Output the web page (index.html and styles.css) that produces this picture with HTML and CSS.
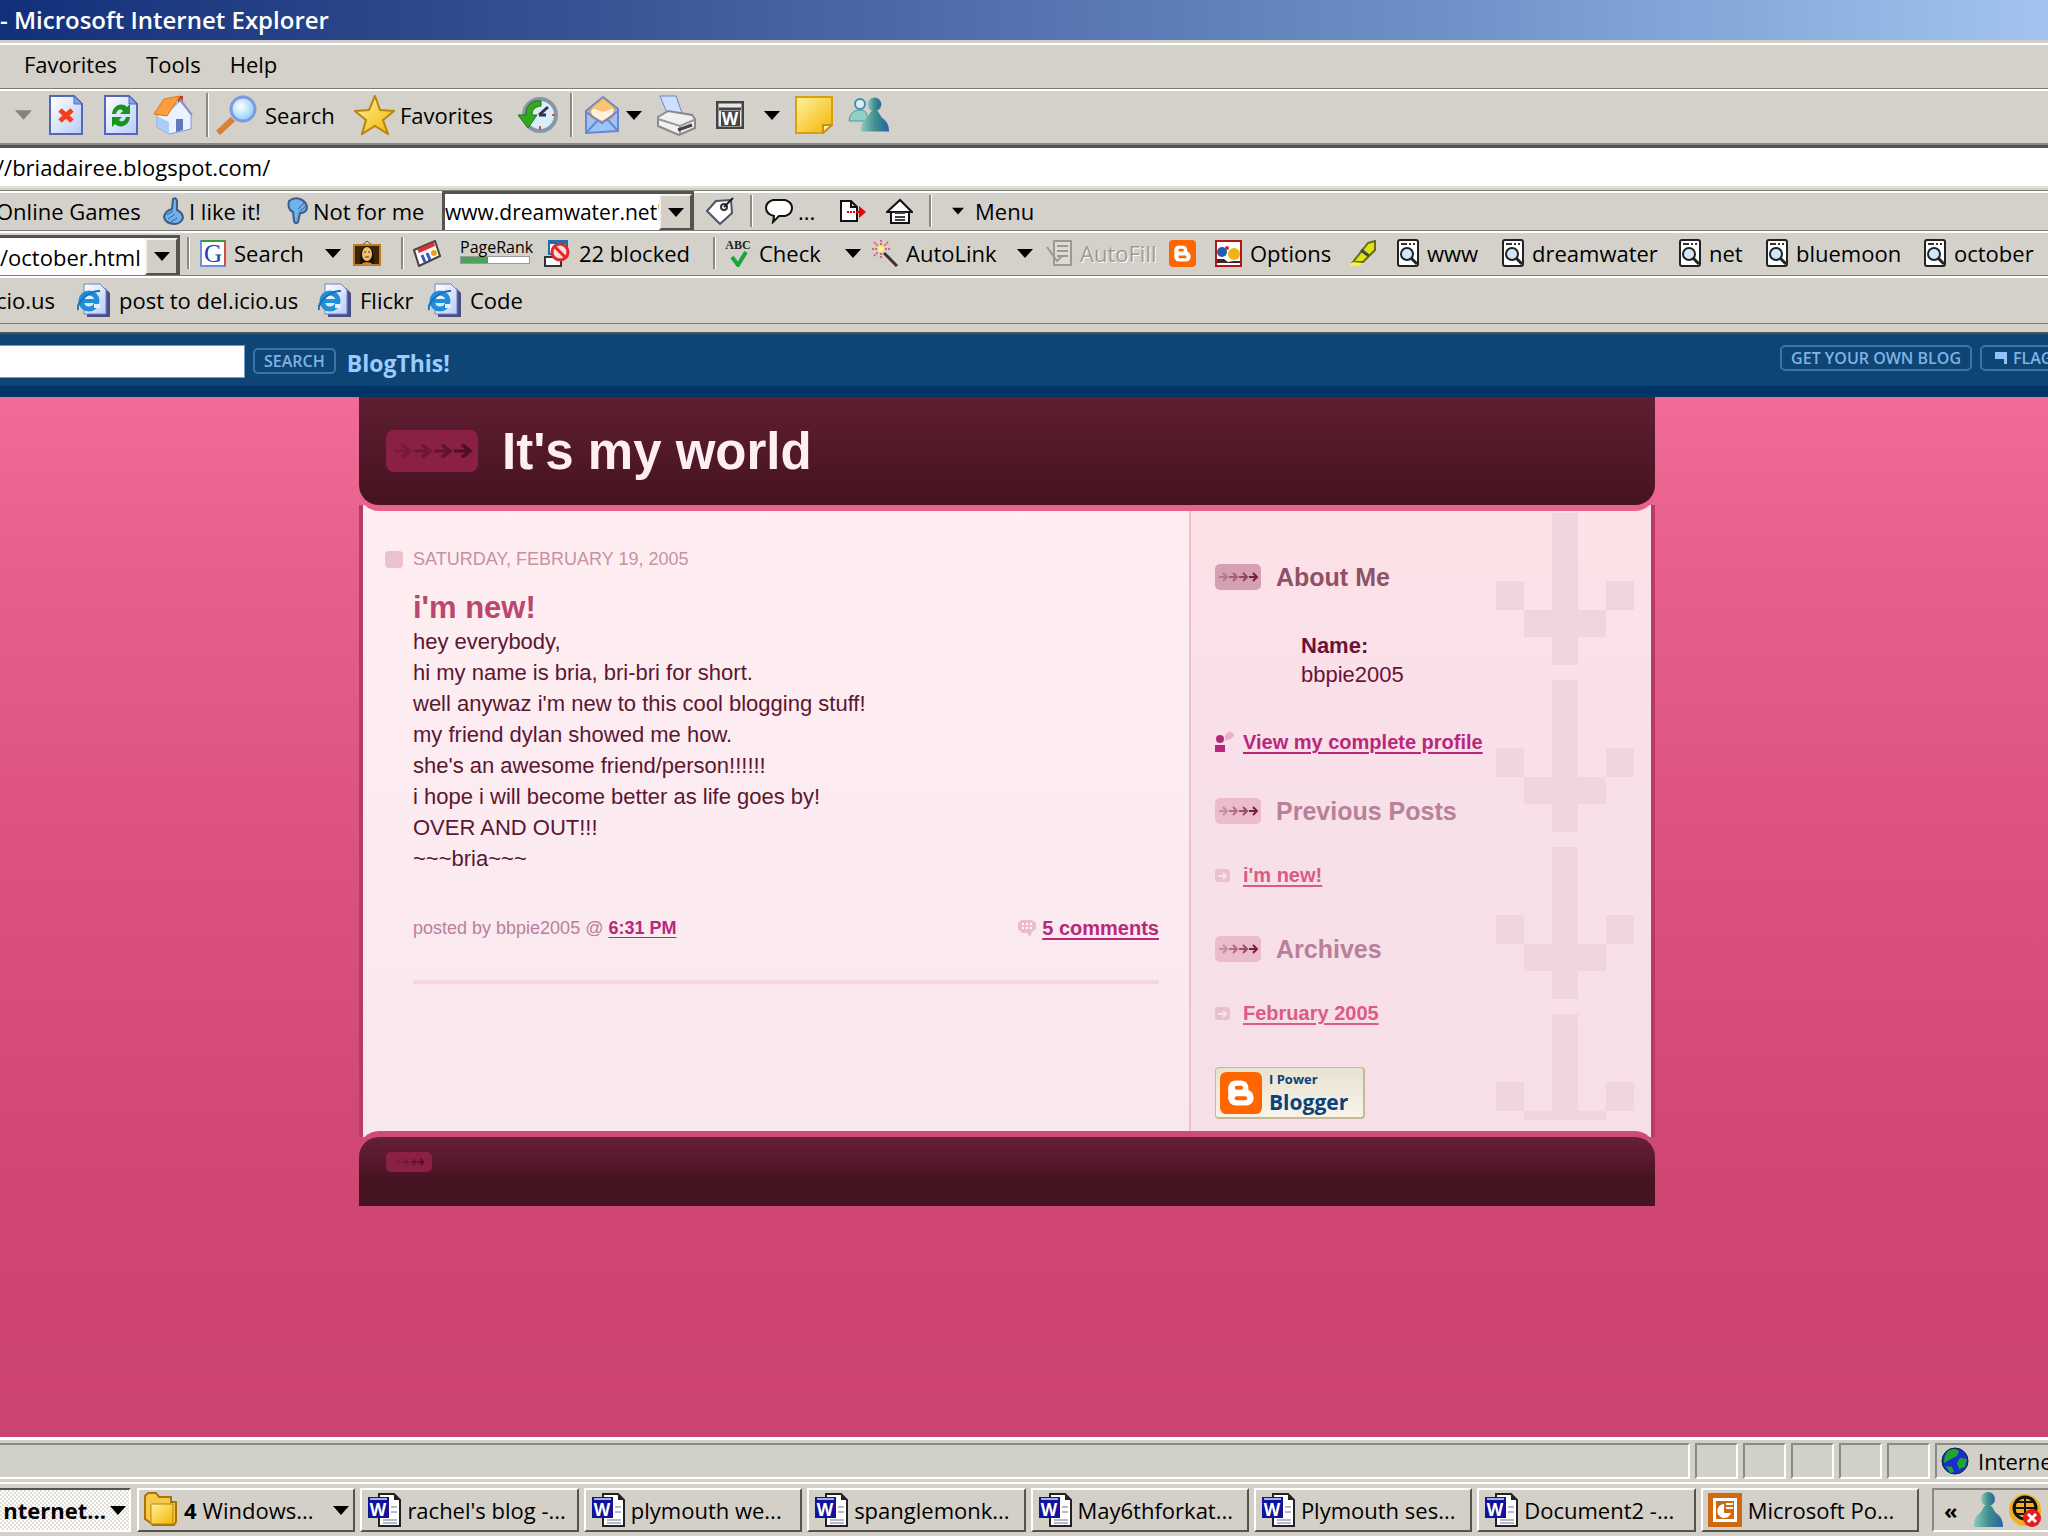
FILE: index.html
```
<!DOCTYPE html>
<html lang="en">
<head>
    <meta charset="UTF-8">
    <meta name="viewport" content="width=device-width, initial-scale=1.0">
    <title>It's my world - Microsoft Internet Explorer</title>
    <link rel="stylesheet" href="styles.css">
</head>
<body>
    <!-- shared icons -->
    <svg class="sprite" width="0" height="0" aria-hidden="true">
        <defs>
            <linearGradient id="paper" x1="0" y1="0" x2="1" y2="1"><stop offset="0" stop-color="#fff"/><stop offset="1" stop-color="#b9ccf6"/></linearGradient>
            <linearGradient id="gold" x1="0" y1="0" x2="1" y2="1"><stop offset="0" stop-color="#fff3a0"/><stop offset="1" stop-color="#f4b400"/></linearGradient>
            <linearGradient id="buddy" x1="0" y1="0" x2="1" y2="0"><stop offset="0" stop-color="#8fc9c2"/><stop offset=".5" stop-color="#3f8f8c"/><stop offset="1" stop-color="#2a62a8"/></linearGradient>
            <radialGradient id="lens" cx=".4" cy=".4" r=".6"><stop offset="0" stop-color="#fff"/><stop offset="1" stop-color="#8fd0f8"/></radialGradient>
            <symbol id="page" viewBox="0 0 34 40"><path d="M1 1h24l8 8v30H1z" fill="url(#paper)" stroke="#5468b8" stroke-width="2"/><path d="M25 1v8h8z" fill="#7fa4ee" stroke="#5468b8"/></symbol>
            <symbol id="ie" viewBox="0 0 34 34"><path d="M10 5h18l5 5v24H10z" fill="#4a4e86"/><path d="M7 1h16l6 6v24H7z" fill="url(#paper)" stroke="#6d83c8"/><circle cx="12" cy="18" r="8" fill="none" stroke="#1f8fdc" stroke-width="5"/><path d="M6 18h14" stroke="#1f8fdc" stroke-width="4"/><path d="M17 21h6v4h-6z" fill="#e6eefb"/><path d="M1 27C-1 20 12 7 23 8" fill="none" stroke="#1673b8" stroke-width="2"/></symbol>
            <symbol id="word" viewBox="0 0 34 34"><path d="M12 1h15l6 6v26H12z" fill="#fff" stroke="#222" stroke-width="2"/><path d="M27 1v6h6z" fill="#222"/><path d="M24 14h6M24 19h6M16 27h14M16 30h14" stroke="#b8b8c8" stroke-width="2"/><path d="M1 4h21v21H1z" fill="#12129a"/><path d="M3 6h17" stroke="#9fb0f0" stroke-width="2"/><text x="11" y="23" text-anchor="middle" class="icon-letter" font-size="17" fill="#fff">W</text></symbol>
            <symbol id="find" viewBox="0 0 22 28"><rect x="1" y="1" width="20" height="26" rx="2" fill="#fff" stroke="#222" stroke-width="2"/><path d="M4 5h6M12 5h2M16 5h2" stroke="#333" stroke-width="2"/><circle cx="10" cy="15" r="6" fill="#cfe6fb" stroke="#222" stroke-width="2"/><path d="M14 19l6 6" stroke="#222" stroke-width="3"/></symbol>
            <symbol id="down" viewBox="0 0 16 9"><path d="M0 0h16l-8 9z" fill="currentColor"/></symbol>
            <symbol id="blogger" viewBox="0 0 40 40"><rect width="40" height="40" rx="6" fill="#ff6600"/><rect x="8" y="8" width="19" height="16" rx="7" fill="#fff"/><rect x="8" y="17" width="24" height="15" rx="7" fill="#fff"/><rect x="8" y="14" width="10" height="12" fill="#fff"/><rect x="14" y="13" width="8" height="4" rx="2" fill="#ff6600"/><rect x="14" y="23" width="12" height="4" rx="2" fill="#ff6600"/></symbol>
            <symbol id="arrows" viewBox="0 0 46 26"><g fill="none" stroke="currentColor" stroke-width="2"><path d="M4 13h8M8 9l4 4-4 4" opacity=".3"/><path d="M14 13h8M18 9l4 4-4 4" opacity=".5"/><path d="M24 13h8M28 9l4 4-4 4" opacity=".7"/><path d="M34 13h8M38 9l4 4-4 4"/></g></symbol>
            <symbol id="person" viewBox="0 0 32 36"><circle cx="16" cy="7" r="7" fill="url(#buddy)"/><path d="M2 35c0-8 2-11 6-14 3-3 3-8 8-8s5 5 8 8c4 3 7 6 7 14z" fill="url(#buddy)"/></symbol>
        </defs>
    </svg>

    <header class="chrome">
        <div class="titlebar">- Microsoft Internet Explorer</div>
        <nav class="menubar">
            <button>Favorites</button>
            <button>Tools</button>
            <button>Help</button>
        </nav>

        <div class="bar toolbar">
            <button class="back-menu" aria-label="Forward menu"><svg width="17" height="10"><use href="#down"/></svg></button>
            <button aria-label="Stop"><svg width="34" height="40" viewBox="0 0 34 40"><use href="#page"/><path d="M11 15l12 11M23 15L11 26" stroke="#f0401c" stroke-width="5"/></svg></button>
            <button aria-label="Refresh"><svg width="34" height="40" viewBox="0 0 34 40"><use href="#page"/><path d="M8 19c1-9 10-12 15-7l3-3v10H16l3-3c-3-3-6-1-7 3zM26 22c-1 9-10 12-15 7l-3 3V22h10l-3 3c3 3 6 1 7-3z" fill="#14961c"/></svg></button>
            <button aria-label="Home"><svg width="40" height="40" viewBox="0 0 40 40"><path d="M25 1h5v10h-5z" fill="#c0392b"/><path d="M4 20l10-2 13-12 11 14v14l-22 5-12-7z" fill="#eaf2ff" stroke="#7f9ad4"/><path d="M4 21l12 6v12L4 32z" fill="#a9cdf5"/><path d="M1 19L11 4l16-3-13 20z" fill="#ff9d3c" stroke="#d87820"/><path d="M27 4l12 16" stroke="#8c93b8" stroke-width="2"/><path d="M23 24h7v11l-7 2z" fill="#5f78b8"/></svg></button>
            <span class="sep"></span>
            <button><svg width="41" height="40" viewBox="0 0 41 40"><path d="M2 38l15-14" stroke="#d98236" stroke-width="6"/><circle cx="27" cy="14" r="12" fill="url(#lens)" stroke="#7c9be0" stroke-width="3"/></svg>Search</button>
            <button class="tight"><svg width="41" height="40" viewBox="0 0 41 40"><path d="M21 1l5 14 14 1-11 9 5 14-13-8-13 8 4-14L1 16l14-1z" fill="url(#gold)" stroke="#b8860b" stroke-width="2"/></svg>Favorites</button>
            <button aria-label="History"><svg width="41" height="40" viewBox="0 0 41 40"><circle cx="23" cy="20" r="16" fill="#d9eefb" stroke="#8796a8" stroke-width="4"/><path d="M22 20l9-8M22 20h7" stroke="#334" stroke-width="3"/><path d="M23 31v4M35 20h3" stroke="#e05030" stroke-width="2"/><path d="M24 6C14 4 8 12 9 20H1l10 13 9-13h-5c0-5 2-8 9-9z" fill="#35a822" stroke="#1d7512"/></svg></button>
            <span class="sep"></span>
            <button aria-label="Mail"><svg width="36" height="40" viewBox="0 0 36 40"><path d="M2 16L19 2l15 12v22L2 38z" fill="#9cc4f8" stroke="#6b86d0" stroke-width="2"/><path d="M6 15L19 4l12 10-2 8-11 5-11-5z" fill="#fff1dc" stroke="#f0a04a" stroke-width="2"/><path d="M8 13l11-9 11 9-11 4z" fill="#f8c478"/><path d="M2 17l16 11 16-12M2 38l12-13M34 36L23 24" fill="none" stroke="#6b86d0" stroke-width="2"/></svg></button>
            <button aria-label="Mail menu"><svg width="16" height="9"><use href="#down"/></svg></button>
            <button aria-label="Print"><svg width="40" height="41" viewBox="0 0 40 41"><path d="M4 1h16l6 17H11z" fill="#cfe0ff" stroke="#6c86c8"/><path d="M2 22l10-6 24 4 3 4v9l-16 7-21-9z" fill="#f0f0f0" stroke="#8a8a8a" stroke-width="2"/><path d="M2 24l22 7 14-6M24 31v8" fill="none" stroke="#999" stroke-width="2"/><path d="M22 35l14-5" stroke="#444" stroke-width="3"/></svg></button>
            <button aria-label="Edit"><svg width="28" height="28" viewBox="0 0 28 28"><rect x="1" y="1" width="26" height="26" fill="#e8e8e8" stroke="#444" stroke-width="3"/><path d="M3 8h22" stroke="#444" stroke-width="3"/><rect x="5" y="10" width="19" height="15" fill="#444"/><text x="14" y="24" text-anchor="middle" class="icon-letter" font-size="17" fill="#fff">W</text></svg></button>
            <button aria-label="Edit menu"><svg width="16" height="9"><use href="#down"/></svg></button>
            <button aria-label="Notes"><svg width="38" height="38" viewBox="0 0 38 38"><path d="M1 1h36v27l-9 9H1z" fill="url(#gold)" stroke="#d8a010" stroke-width="2"/><path d="M28 37v-8h9z" fill="#fff3a8" stroke="#c89010" stroke-width="2"/></svg></button>
            <button aria-label="Messenger"><svg width="42" height="36" viewBox="0 0 42 36"><circle cx="12" cy="7" r="5" fill="#d8eef4" stroke="#3f8fb0" stroke-width="2"/><path d="M1 24c1-8 5-11 11-11s7 3 8 11z" fill="#8fd0c0" stroke="#4a9aa0"/><use href="#person" x="11" y="0" width="31" height="36"/></svg></button>
        </div>

        <div class="address">
            <input type="text" aria-label="Address" value="//briadairee.blogspot.com/">
        </div>

        <div class="bar stumble">
            <button class="clipped">Online Games</button>
            <button class="tight"><svg width="21" height="28" viewBox="0 0 21 28"><path d="M10 2q3-2 4 2v9q6 3 6 8-2 6-9 6-9-1-10-7 1-6 8-8z" fill="#6fb2ee" stroke="#3d5c86" stroke-width="2"/><path d="M4 18l6-4M5 22l7-5M8 25l6-4" stroke="#3d5c86"/></svg>I like it!</button>
            <button class="tight"><svg width="21" height="28" viewBox="0 0 21 28"><path d="M2 4q5-4 11-2 7 3 7 9-1 5-7 5l-2 9q-3 3-4-1l-1-9Q0 12 2 4z" fill="#6fb2ee" stroke="#3d5c86" stroke-width="2"/><path d="M11 12l6-6M13 14l6-5" stroke="#3d5c86"/></svg>Not for me</button>
            <div class="combo">
                <input type="text" aria-label="Tag" value="www.dreamwater.net'">
                <button aria-label="Open list"><svg width="16" height="9"><use href="#down"/></svg></button>
            </div>
            <button aria-label="Tag this"><svg width="28" height="28" viewBox="0 0 28 28"><path d="M1 14L10 4l15-1 1 13-12 11z" fill="#fff" stroke="#4a5568" stroke-width="2"/><circle cx="18" cy="10" r="3" fill="none" stroke="#333" stroke-width="2"/><path d="M18 10l9-9" stroke="#222" stroke-width="2"/></svg></button>
            <span class="sep"></span>
            <button class="tight"><svg width="28" height="26" viewBox="0 0 28 26"><path d="M8 2h12q7 2 7 8t-7 8h-6l-6 6 1-6q-8-2-8-8t7-8z" fill="#fff" stroke="#111" stroke-width="2"/></svg>...</button>
            <button aria-label="Send page"><svg width="27" height="24" viewBox="0 0 27 24"><path d="M2 2h10l6 6v14H2zM12 2v6h6" fill="#fff" stroke="#111" stroke-width="2"/><path d="M8 13h9" stroke="#e00" stroke-width="2" stroke-dasharray="2 1"/><path d="M17 13h5" stroke="#e00" stroke-width="2"/><path d="M20 7l7 6-7 6z" fill="#e00"/></svg></button>
            <button aria-label="My page"><svg width="27" height="26" viewBox="0 0 27 26"><path d="M5 13v12h18V13" fill="#fff" stroke="#111" stroke-width="2"/><path d="M1 14L14 2l12 12z" fill="#fff" stroke="#111" stroke-width="2"/><path d="M9 15h10M9 19h10M9 22h10" stroke="#444" stroke-width="2"/></svg></button>
            <span class="sep"></span>
            <button class="wide"><svg width="12" height="8"><use href="#down"/></svg>Menu</button>
        </div>

        <div class="bar google">
            <div class="combo">
                <input type="text" aria-label="Google search" value="/october.html">
                <button aria-label="Open list"><svg width="16" height="9"><use href="#down"/></svg></button>
            </div>
            <span class="sep"></span>
            <button><svg width="26" height="27" viewBox="0 0 26 27"><rect x="1" y="1" width="24" height="25" fill="#fff" stroke="#6f8fd8" stroke-width="2"/><path d="M1 1h24" stroke="#3a9a3a" stroke-width="2"/><path d="M25 1v25" stroke="#d84a4a" stroke-width="2"/><text x="13" y="22" text-anchor="middle" class="icon-serif" font-size="25" fill="#1a3fb0">G</text></svg>Search</button>
            <button aria-label="Search menu"><svg width="16" height="9"><use href="#down"/></svg></button>
            <button aria-label="Images"><svg width="28" height="26" viewBox="0 0 28 26"><path d="M9 5l5-4 5 4" fill="none" stroke="#555"/><rect x="1" y="5" width="26" height="20" fill="#3a2708" stroke="#c07a1c" stroke-width="2"/><path d="M7 24q0-18 7-18t7 18z" fill="#1c1004"/><ellipse cx="14" cy="14" rx="5" ry="7" fill="#f0c070"/><path d="M11 12h2M15 12h2M12 17h4" stroke="#5a3510"/><path d="M7 25q7-6 14 0z" fill="#c88a34"/></svg></button>
            <span class="sep"></span>
            <button aria-label="News"><svg width="28" height="27" viewBox="0 0 28 27"><path d="M1 10L22 1l5 15-21 10z" fill="#fff" stroke="#444" stroke-width="2"/><path d="M4 9l17-7 1 4L6 13z" fill="#e03030"/><path d="M9 15l3 7M14 13l3 7" stroke="#3554c8" stroke-width="3"/><circle cx="21" cy="13" r="3" fill="#e8a020"/></svg></button>
            <div class="pagerank">PageRank<span class="meter"></span></div>
            <button><svg width="27" height="27" viewBox="0 0 27 27"><rect x="5" y="1" width="18" height="13" fill="#fff" stroke="#1f6fb0" stroke-width="2"/><path d="M5 2h18" stroke="#1f6fb0" stroke-width="4"/><rect x="1" y="17" width="16" height="9" fill="#fff" stroke="#333" stroke-width="2"/><circle cx="16" cy="12" r="8" fill="#fbdcdc" stroke="#e02828" stroke-width="3"/><path d="M11 7l11 11" stroke="#e02828" stroke-width="3"/></svg>22 blocked</button>
            <span class="sep"></span>
            <button><svg width="26" height="28" viewBox="0 0 26 28"><text x="13" y="10" text-anchor="middle" class="icon-serif" font-size="12" font-weight="bold" fill="#222">ABC</text><path d="M7 18l6 8 8-13" fill="none" stroke="#18a83a" stroke-width="4"/></svg>Check</button>
            <button aria-label="Check menu"><svg width="16" height="9"><use href="#down"/></svg></button>
            <button><svg width="26" height="27" viewBox="0 0 26 27"><path d="M9 0v5M9 13v5M0 9h5M13 9h6M2 2l4 4M16 2l-4 4M2 16l4-4" stroke="#e8606c" stroke-width="2" stroke-dasharray="2 1"/><circle cx="9" cy="9" r="3" fill="#fff27a"/><path d="M12 13l13 13" stroke="#3a3030" stroke-width="3"/></svg>AutoLink</button>
            <button aria-label="AutoLink menu"><svg width="16" height="9"><use href="#down"/></svg></button>
            <button disabled><svg width="26" height="28" viewBox="0 0 26 28"><rect x="8" y="2" width="17" height="24" fill="#dedbd5" stroke="#9a9a94" stroke-width="2"/><path d="M11 7h11M11 12h11M11 17h11M1 8l10 14 5-5" fill="none" stroke="#9a9a94" stroke-width="2"/></svg>AutoFill</button>
            <button aria-label="Blogger"><svg width="27" height="27"><use href="#blogger"/></svg></button>
            <button><svg width="27" height="27" viewBox="0 0 27 27"><rect x="1" y="1" width="25" height="25" fill="#fff" stroke="#b01818" stroke-width="2"/><circle cx="7" cy="12" r="5" fill="#1f5fb0"/><circle cx="12" cy="8" r="2" fill="#d82828"/><circle cx="19" cy="14" r="6" fill="#f0b418"/><path d="M2 19h7l4 3 5-1h7v2H2z" fill="#3c2a20"/></svg>Options</button>
            <button aria-label="Highlight"><svg width="28" height="27" viewBox="0 0 28 27"><path d="M20 3l7-2v9L15 22H5z" fill="#dfe414" stroke="#6a6c10" stroke-width="2"/><path d="M13 10l8 6" stroke="#444" stroke-width="3"/><path d="M1 26l4-4 10 1-3 3z" fill="#f2f53c"/></svg></button>
            <button><svg width="22" height="28"><use href="#find"/></svg>www</button>
            <button><svg width="22" height="28"><use href="#find"/></svg>dreamwater</button>
            <button><svg width="22" height="28"><use href="#find"/></svg>net</button>
            <button><svg width="22" height="28"><use href="#find"/></svg>bluemoon</button>
            <button><svg width="22" height="28"><use href="#find"/></svg>october</button>
        </div>

        <nav class="bar links">
            <a class="clipped" href="#">cio.us</a>
            <a href="#"><svg width="34" height="34"><use href="#ie"/></svg>post to del.icio.us</a>
            <a href="#"><svg width="34" height="34"><use href="#ie"/></svg>Flickr</a>
            <a href="#"><svg width="34" height="34"><use href="#ie"/></svg>Code</a>
        </nav>
    </header>

    <main class="page">
        <div class="navbar">
            <input type="text" aria-label="Search this blog">
            <button>SEARCH</button>
            <a class="blogthis" href="#">BlogThis!</a>
            <a class="navbutton" href="#">GET YOUR OWN BLOG</a>
            <a class="navbutton flag" href="#"><svg width="12" height="12" viewBox="0 0 12 12"><path d="M0 0h12v12H9V7H0z" fill="#8fc3f5"/></svg>FLAG</a>
        </div>

        <div class="blog">
            <header class="blog-header">
                <svg class="badge" width="92" height="42" viewBox="0 0 46 26" preserveAspectRatio="none"><use href="#arrows"/></svg>
                <h1>It's my world</h1>
            </header>

            <div class="content">
                <div class="posts">
                    <h2 class="date">Saturday, February 19, 2005</h2>
                    <article class="post">
                        <h3>i'm new!</h3>
                        <p>hey everybody,<br>
                        hi my name is bria, bri-bri for short.<br>
                        well anywaz i'm new to this cool blogging stuff!<br>
                        my friend dylan showed me how.<br>
                        she's an awesome friend/person!!!!!!<br>
                        i hope i will become better as life goes by!<br>
                        OVER AND OUT!!!<br>
                        ~~~bria~~~</p>
                        <div class="post-footer">
                            <span>posted by bbpie2005 @ <a href="#">6:31 PM</a></span>
                            <span class="comments"><svg width="18" height="17" viewBox="0 0 18 17"><path d="M4 0h10l4 3v6l-4 3-2 5-3-4H4L0 9V3z" fill="#ecbccb"/><path d="M4 4h10M4 8h10" stroke="#fff" stroke-width="2" stroke-dasharray="2 2"/></svg><a href="#">5 comments</a></span>
                        </div>
                    </article>
                </div>

                <aside class="sidebar">
                    <h2 class="about"><svg class="badge" width="46" height="26"><use href="#arrows"/></svg>About Me</h2>
                    <dl>
                        <dt>Name:</dt>
                        <dd>bbpie2005</dd>
                    </dl>
                    <p class="item profile"><svg width="19" height="20" viewBox="0 0 19 20"><circle cx="5" cy="7" r="4" fill="#b8287a"/><path d="M0 20v-7h10v7z" fill="#b8287a"/><path d="M10 4q1-4 5-4 4 1 4 3t-4 4l-5 2z" fill="#eeb0c4"/></svg><a href="#">View my complete profile</a></p>
                    <h2><svg class="badge" width="46" height="26"><use href="#arrows"/></svg>Previous Posts</h2>
                    <p class="item"><svg width="15" height="13" viewBox="0 0 15 13"><rect width="15" height="13" rx="3" fill="#e8c0ce"/><path d="M3 7h8M8 4l3 3-3 3" fill="none" stroke="#f8e2ea" stroke-width="2"/></svg><a href="#">i'm new!</a></p>
                    <h2><svg class="badge" width="46" height="26"><use href="#arrows"/></svg>Archives</h2>
                    <p class="item"><svg width="15" height="13" viewBox="0 0 15 13"><rect width="15" height="13" rx="3" fill="#e8c0ce"/><path d="M3 7h8M8 4l3 3-3 3" fill="none" stroke="#f8e2ea" stroke-width="2"/></svg><a href="#">February 2005</a></p>
                    <a class="power" href="#">
                        <svg width="42" height="42"><use href="#blogger"/></svg>
                        <span><small>I Power</small><b>Blogger</b></span>
                    </a>
                </aside>
            </div>

            <footer class="blog-footer">
                <svg class="badge" width="46" height="20" viewBox="0 0 46 26"><use href="#arrows"/></svg>
            </footer>
        </div>
    </main>

    <div class="statusbar">
        <span class="message"></span>
        <span></span>
        <span></span>
        <span></span>
        <span></span>
        <span></span>
        <span class="zone"><svg width="28" height="28" viewBox="0 0 28 28"><circle cx="14" cy="14" r="13" fill="#1a2fd0" stroke="#102040"/><path d="M7 4q6-4 11 0l-2 5-6 3-7 4q0-8 4-12zM19 11l7 1-2 8-6 2-2-6zM5 19l6 1 2 5-4 1z" fill="#1fa52c"/></svg>Internet</span>
    </div>

    <footer class="taskbar">
        <button class="active">nternet...<svg width="16" height="11"><use href="#down"/></svg></button>
        <div class="tasks">
            <button><svg width="34" height="36" viewBox="0 0 34 36"><path d="M1 4l3-3h8l3 4h12v5h5v20l-2 3H9l-5-4-3-2z" fill="#f6c84c" stroke="#a87408" stroke-width="2"/><path d="M7 12h22v20H7z" fill="url(#gold)" stroke="#b8860b"/></svg><b>4</b><span>Windows...</span><svg width="16" height="11"><use href="#down"/></svg></button>
            <button><svg width="34" height="34"><use href="#word"/></svg><span>rachel's blog -...</span></button>
            <button><svg width="34" height="34"><use href="#word"/></svg><span>plymouth we...</span></button>
            <button><svg width="34" height="34"><use href="#word"/></svg><span>spanglemonk...</span></button>
            <button><svg width="34" height="34"><use href="#word"/></svg><span>May6thforkat...</span></button>
            <button><svg width="34" height="34"><use href="#word"/></svg><span>Plymouth ses...</span></button>
            <button><svg width="34" height="34"><use href="#word"/></svg><span>Document2 -...</span></button>
            <button><svg width="34" height="34" viewBox="0 0 34 34"><rect width="34" height="34" fill="#cf6a10"/><rect x="5" y="5" width="24" height="24" fill="#fff"/><rect x="8" y="8" width="18" height="18" fill="#cf6a10"/><path d="M16 11a7 7 0 1 0 7 9h-7z" fill="#fff"/><path d="M18 11h7M18 15h7" stroke="#fff" stroke-width="2"/></svg><span>Microsoft Po...</span></button>
        </div>
        <div class="tray">
            <b>«</b>
            <svg width="32" height="36"><use href="#person"/></svg>
            <svg width="34" height="34" viewBox="0 0 34 34"><circle cx="17" cy="17" r="16" fill="#f0b020"/><circle cx="17" cy="15" r="11" fill="none" stroke="#111" stroke-width="3"/><path d="M17 4v22M6 15h22M9 9h16M9 21h16" stroke="#111" stroke-width="2"/><circle cx="24" cy="25" r="9" fill="#e81c1c"/><path d="M20 21l8 8M28 21l-8 8" stroke="#fff" stroke-width="3"/></svg>
        </div>
    </footer>
</body>
</html>
```
FILE: styles.css
```
* {
    box-sizing: border-box;
}
body {
    margin: 0;
    height: 100vh;
    overflow: hidden;
    display: flex;
    flex-direction: column;
    font-family: "Open Sans", "Noto Sans", sans-serif;
    font-size: 22px;
    color: #000;
    background-color: #d4d0c8;
}
button, input {
    font: inherit;
    color: inherit;
    margin: 0;
    padding: 0;
    border: 0;
    background: none;
    outline: none;
}
svg {
    flex: none;
}
.sprite {
    position: absolute;
}
.icon-letter {
    font-family: "Open Sans", sans-serif;
    font-weight: bold;
}
.icon-serif {
    font-family: "Liberation Serif", serif;
}

/* window chrome */
.chrome {
    background-color: #d3d1c9;
    border-bottom: 2px solid #55534f;
}
.titlebar {
    height: 43px;
    line-height: 40px;
    font-size: 24px;
    font-weight: 600;
    color: #fff;
    background: linear-gradient(to right, #12307a, #3a5596 30%, #6e90c8 70%, #a2c4ee);
    border-bottom: 3px solid #cfcdc6;
}
.menubar {
    display: flex;
    align-items: center;
    gap: 29px;
    height: 45px;
    padding: 0 0 6px 24px;
    border-top: 2px solid #fff;
}
.bar {
    display: grid;
    align-items: center;
    justify-items: start;
    border-top: 1px solid #7b7a75;
    box-shadow: inset 0 2px #fff;
}
.bar > button, .bar > a {
    display: flex;
    align-items: center;
    gap: 8px;
    white-space: nowrap;
    color: #000;
    text-decoration: none;
}
.bar > .tight {
    gap: 5px;
}
.bar > .wide {
    gap: 11px;
    padding-left: 10px;
}
.bar > .clipped {
    text-indent: -4px;
}
.bar > button:disabled {
    color: #9a9a94;
    text-shadow: 1px 1px #fff;
}
.sep {
    width: 3px;
    height: 32px;
    border-left: 2px solid #8a8984;
    border-right: 1px solid #fff;
}
.toolbar {
    height: 55px;
    padding-bottom: 2px;
    grid-template-columns: 49px 55px 49px 53px 10px 138px 163px 53px 14px 42px 30px 60px 48px 31px 53px auto;
}
.toolbar .sep {
    height: 44px;
}
.bar > .back-menu {
    padding-left: 15px;
    color: #85837d;
}
.address {
    height: 47px;
    padding-bottom: 2px;
    border-top: 2px solid #8a8984;
}
.address input {
    display: block;
    width: 100%;
    height: 43px;
    text-indent: -4px;
    background-color: #fff;
    border-top: 3px solid #55534f;
    border-bottom: 2px solid #e4e2dc;
}
.combo {
    display: flex;
    align-self: stretch;
    width: 100%;
    background-color: #fff;
    border: solid #55534f;
    border-width: 3px 2px 0 3px;
}
.combo input {
    flex: 1;
    min-width: 0;
}
.combo button {
    display: flex;
    align-items: center;
    justify-content: center;
    width: 33px;
    background-color: #d4d0c8;
    border: 2px solid;
    border-color: #f4f2ec #55534f #55534f #f4f2ec;
}
.stumble {
    height: 40px;
    grid-template-columns: 163px 124px 155px 252px 56px 15px 74px 47px 43px 13px auto;
}
.stumble .combo {
    font-size: 21px;
}
.stumble .combo + button {
    padding-left: 12px;
}
.google {
    height: 45px;
    grid-template-columns: 180px 20px 125px 28px 48px 12px 47px 84px 169px 12px 120px 27px 145px 29px 123px 46px 133px 49px 105px 177px 87px 158px auto;
}
.google .combo {
    height: 40px;
    align-self: end;
    border-left: 0;
}
.google .combo + .sep {
    margin-left: 7px;
}
.pagerank {
    font-size: 16px;
    line-height: 18px;
    align-self: start;
    padding-top: 7px;
}
.meter {
    display: block;
    width: 70px;
    height: 8px;
    border: 1px solid #9a9a94;
    background: linear-gradient(to right, #4aa35c 40%, #fff 40%);
}
.links {
    height: 57px;
    padding-bottom: 9px;
    grid-template-columns: 77px 241px 110px auto;
    background: linear-gradient(#7b7a75, #7b7a75) 0 47px / 100% 1px no-repeat;
}

/* page */
.page {
    flex: 1;
    min-height: 0;
    overflow: hidden;
    background: linear-gradient(#f06b97 6%, #e8628d 18%, #dd5480 42%, #d04672 78%, #cb436f);
    font-family: "Liberation Sans", Arial, sans-serif;
    color: #5a1730;
}
.navbar {
    display: flex;
    align-items: flex-start;
    gap: 8px;
    height: 63px;
    padding-top: 11px;
    font-family: "Open Sans", sans-serif;
    background-color: #0f4575;
    border-bottom: 11px solid #003366;
    overflow: hidden;
}
.navbar input {
    width: 245px;
    height: 33px;
    background-color: #fff;
    border: solid #6d9cc6;
    border-width: 1px 1px 1px 0;
}
.navbar button, .navbutton {
    display: flex;
    align-items: center;
    gap: 6px;
    flex: none;
    height: 26px;
    padding: 0 9px;
    font-size: 16px;
    font-weight: 600;
    color: #7fb2e5;
    text-decoration: none;
    border: 2px solid #3b74ab;
    border-radius: 5px;
}
.navbar button {
    margin-top: 3px;
}
/* runs past the right edge of the window */
.navbar .flag {
    width: 90px;
    padding-left: 13px;
    margin-right: -22px;
}
.blogthis {
    margin-right: auto;
    padding-left: 3px;
    font-size: 23px;
    line-height: 36px;
    font-weight: bold;
    color: #99ccff;
    text-decoration: none;
}
.blog {
    margin: 0 393px 0 359px;
}
.badge {
    border-radius: 5px;
    background-color: #8b2045;
    color: #4d1024;
}
.blog-header, .blog-footer {
    position: relative;
}
.blog-header {
    display: flex;
    align-items: center;
    gap: 24px;
    height: 108px;
    padding-left: 27px;
    background: linear-gradient(#5f1e31, #451321);
    border-radius: 0 0 20px 20px;
    box-shadow: 0 6px #e8628d;
}
.blog-header .badge {
    border-radius: 8px;
}
.blog-header h1 {
    margin: 0;
    font-size: 51px;
    color: #ffeef2;
}
.content {
    display: flex;
    border: solid #b83a66;
    border-width: 0 4px;
    background: linear-gradient(#ffeef1, #fbeaf0 60%, #f8e8eb);
}
.posts {
    flex: 1;
    padding: 42px 30px 0 50px;
}
.date {
    display: flex;
    align-items: center;
    gap: 10px;
    margin: 0 0 0 -28px;
    font-size: 18px;
    line-height: 24px;
    font-weight: normal;
    text-transform: uppercase;
    color: #c890a4;
}
.date::before {
    content: "";
    width: 18px;
    height: 17px;
    border-radius: 4px;
    background-color: #ecc0cf;
}
.post {
    border-bottom: 4px solid #f7d6e0;
}
.post h3 {
    margin: 19px 0 0;
    font-size: 31px;
    line-height: 36px;
    color: #b9476e;
}
.post p {
    margin: 0;
    font-size: 22px;
    line-height: 31px;
}
.post-footer {
    display: flex;
    justify-content: space-between;
    padding: 42px 0 40px;
    font-size: 18px;
    line-height: 24px;
    color: #b9809a;
}
.comments {
    display: flex;
    align-items: center;
    gap: 6px;
    font-size: 20px;
}
.blog a {
    font-weight: bold;
    color: #b8287a;
    text-underline-offset: 3px;
}
.sidebar {
    width: 462px;
    padding: 57px 0 18px 24px;
    border-left: 2px solid #ecc0cf;
    background:
        linear-gradient(#f7dfe7, #f7dfe7) 0 100% / 100% 17px no-repeat,
        url("data:image/svg+xml,%3Csvg xmlns='http://www.w3.org/2000/svg' width='138' height='167'%3E%3Cpath fill='%23f0d5de' d='M56 2h26v97h28v27H82v28H56v-28H28V99h28zM0 70h28v29H0zM110 70h28v29h-28z'/%3E%3C/svg%3E") 305px 6px / 138px 167px repeat-y,
        linear-gradient(#fde2e7, #f8dfe9 40%, #f7dfe7);
}
.sidebar h2 {
    display: flex;
    align-items: center;
    gap: 15px;
    margin: 0;
    font-size: 25px;
    line-height: 30px;
    color: #b9809a;
}
.sidebar .badge {
    color: #7a1c40;
    background-color: #ecbccb;
}
.sidebar .about {
    color: #8f5068;
}
.sidebar .about .badge {
    background-color: #d5a0b2;
}
.sidebar dl {
    margin: 39px 0 39px 86px;
    font-size: 22px;
    line-height: 29px;
    color: #6a1236;
}
.sidebar dt {
    font-weight: bold;
}
.sidebar dd {
    margin: 0;
}
.item {
    display: grid;
    grid-template-columns: 28px auto;
    align-items: center;
    margin: 35px 0 45px;
    font-size: 20px;
    line-height: 28px;
}
.item:last-of-type {
    margin-bottom: 40px;
}
.item a {
    justify-self: start;
    color: #dc5a86;
}
.sidebar .profile {
    margin: 0 0 40px;
}
.profile a {
    color: #b8287a;
}
.power {
    display: flex;
    align-items: center;
    gap: 7px;
    width: 150px;
    height: 52px;
    padding-left: 4px;
    font-family: "Open Sans", sans-serif;
    text-decoration: none;
    background: linear-gradient(#e9e2d0, #f8f4ea);
    border: solid #c8b898;
    border-width: 1px 2px 2px 1px;
    border-radius: 4px;
}
.power small, .power b {
    display: block;
    color: #0a4378;
}
.power small {
    font-size: 13px;
    line-height: 18px;
}
.power b {
    font-size: 21px;
    font-weight: bold;
    line-height: 28px;
}
.blog-footer {
    height: 69px;
    padding: 15px 27px;
    background: linear-gradient(#642035, #5b192d 30%, #471322 60%, #451321);
    border-radius: 20px 20px 0 0;
    box-shadow: 0 -6px #cf4a74;
}

/* bottom of the screen */
.statusbar {
    display: flex;
    gap: 5px;
    height: 47px;
    padding: 3px 0 3px;
    border-top: 3px solid #fff;
    border-bottom: 2px solid #fff;
    background-color: #d2d1c9;
    overflow: hidden;
}
.statusbar span {
    width: 43px;
    border: 2px solid;
    border-color: #8a8984 #fff #fff #8a8984;
}
.statusbar .message {
    flex: 1;
    border-left: 0;
}
.statusbar .zone {
    display: flex;
    align-items: center;
    gap: 9px;
    width: 113px;
    padding-left: 4px;
    border-right: 0;
    white-space: nowrap;
    overflow: hidden;
}
.taskbar {
    display: flex;
    gap: 6px;
    height: 52px;
    padding: 4px 0;
    background-color: #d4d0c8;
}
.tasks {
    display: flex;
    flex: 1;
    gap: 5px;
}
.taskbar button {
    display: flex;
    align-items: center;
    gap: 6px;
    padding-left: 5px;
    white-space: nowrap;
    border: 2px solid;
    border-color: #fff #55534f #55534f #fff;
}
.tasks button {
    flex: 1 1 0;
    min-width: 0;
}
.tasks svg:last-child {
    margin-left: auto;
    margin-right: 4px;
}
.taskbar .active {
    width: 131px;
    padding: 0 3px 0 0;
    justify-content: flex-end;
    gap: 4px;
    font-weight: bold;
    border-color: #55534f #fff #fff #55534f;
    border-left: 0;
    background: repeating-conic-gradient(#fff 0 25%, #e2dfd9 0 50%) 0 0 / 4px 4px;
}
.tray {
    display: flex;
    align-items: center;
    gap: 4px;
    width: 116px;
    margin-left: 7px;
    padding-left: 10px;
    border: 2px solid;
    border-color: #8a8984 #fff #fff #8a8984;
    border-right: 0;
}
.tray b {
    width: 24px;
}
```
